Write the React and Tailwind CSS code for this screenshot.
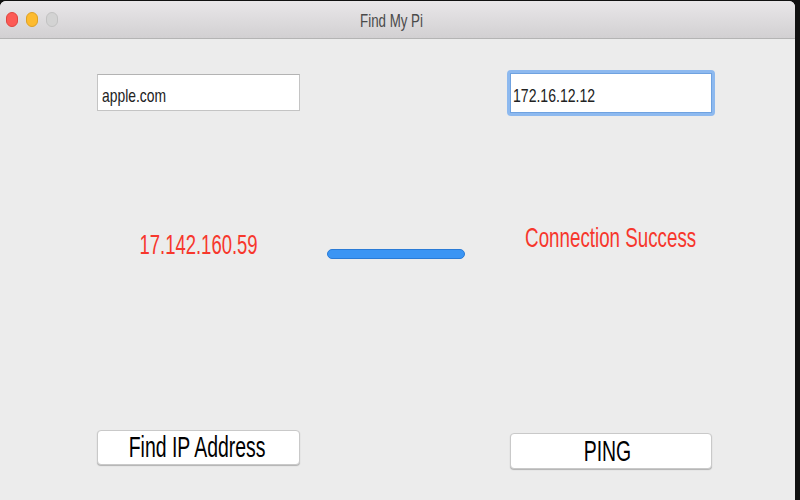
export default function App() {
  return (
    <div className="w-[800px] h-[500px] bg-[#111111] pt-px pr-[5px] flex font-['Liberation_Sans',Arial,sans-serif] whitespace-nowrap">
      <div className="flex-1 flex flex-col rounded-t-[6px] overflow-hidden bg-[#ececec]">
        {/* title bar */}
        <div className="h-[38px] shrink-0 grid grid-cols-[1fr_auto_1fr] items-center border-b border-[#b4b4b4] bg-gradient-to-b from-[#e9e7e9] to-[#d2d0d2]">
          <div className="flex items-center gap-[8px] pl-[6px]">
            <span className="w-[12px] h-[15px] rounded-full bg-[#fc5a55] border border-[#e0443e]" />
            <span className="w-[12px] h-[15px] rounded-full bg-[#fdbb2f] border border-[#dea123]" />
            <span className="w-[12px] h-[15px] rounded-full bg-[#d3d3d3] border border-[#c2c2c2]" />
          </div>
          <div className="pr-[12px] pt-[2px] text-[18px] leading-none text-[#4a4a4a]">
            <span className="inline-block scale-x-[0.74]">Find My Pi</span>
          </div>
          <div />
        </div>

        {/* content */}
        <div className="flex-1 flex pl-[97px]">
          {/* left column */}
          <div className="w-[203px] flex flex-col">
            <div className="mt-[35px] h-[37px] bg-white border border-[#c4c4c4] border-t-[#b3b3b3] flex items-center pl-[4px] pt-[7px] text-[19px] text-[#222]">
              <span className="inline-block origin-left scale-x-[0.73]">apple.com</span>
            </div>
            <div className="mt-[118px] h-[32px] flex items-center justify-center text-[28px] leading-none text-[#f7372c]">
              <span className="inline-block scale-x-[0.66]">17.142.160.59</span>
            </div>
            <button className="mt-[169px] h-[35px] bg-white rounded-[4px] border border-[#c9c9c9] shadow-[0_1px_1px_rgba(0,0,0,0.25)] flex items-center justify-center pr-[2px] text-[29px] leading-none text-black">
              <span className="inline-block scale-x-[0.67]">Find IP Address</span>
            </button>
          </div>

          {/* middle column */}
          <div className="ml-[27px] w-[138px] flex flex-col">
            <div className="mt-[210px] h-[10px] rounded-full bg-[#3b95f4] border border-[#2a7bd6]" />
          </div>

          {/* right column */}
          <div className="ml-[42px] w-[208px] flex flex-col">
            <div className="mt-[31px] h-[46px] rounded-[4px] bg-[#8db9ef] p-[3px]">
              <div className="h-full bg-white border border-[#6fa2e0] flex items-center pl-[2px] pt-[7px] text-[19px] text-[#222]">
                <span className="inline-block origin-left scale-x-[0.74]">172.16.12.12</span>
              </div>
            </div>
            <div className="mt-[106px] h-[32px] flex items-center justify-center text-[28px] leading-none text-[#f7372c]">
              <span className="inline-block scale-x-[0.67]">Connection Success</span>
            </div>
            <button className="mt-[179px] mx-[3px] h-[36px] bg-white rounded-[4px] border border-[#c9c9c9] shadow-[0_1px_1px_rgba(0,0,0,0.25)] flex items-center justify-center pr-[8px] text-[29px] leading-none text-black">
              <span className="inline-block scale-x-[0.67]">PING</span>
            </button>
          </div>
        </div>
      </div>
    </div>
  );
}
